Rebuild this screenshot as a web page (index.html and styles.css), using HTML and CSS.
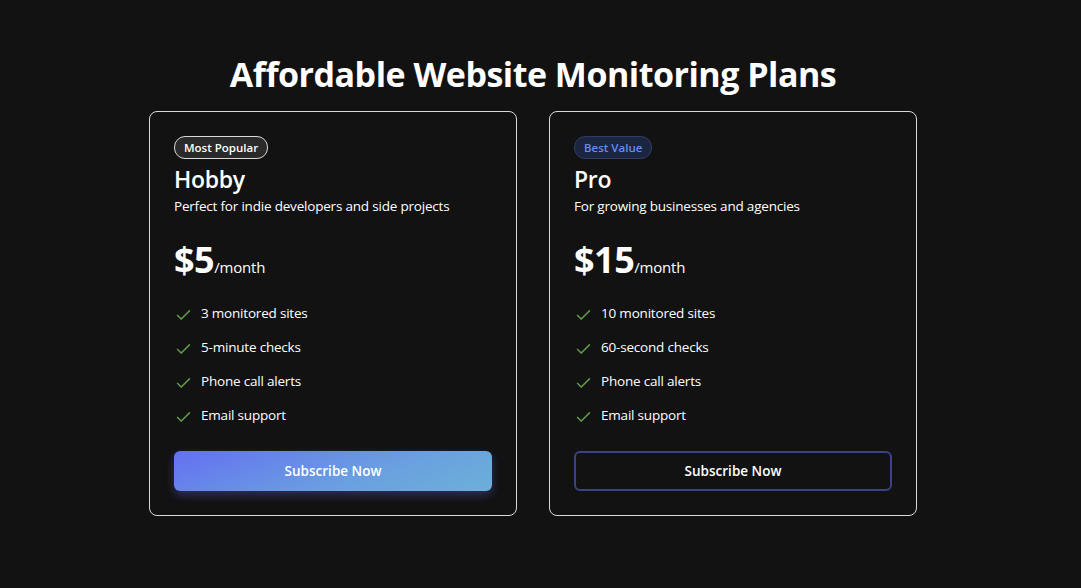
FILE: index.html
```html
<!DOCTYPE html>
<html lang="en">
<head>
<meta charset="utf-8">
<title>Pricing</title>
<link rel="stylesheet" href="styles.css">
</head>
<body>
<main class="page">
  <h1 class="title">Affordable Website Monitoring Plans</h1>
  <div class="plans">
    <section class="card">
      <span class="badge badge-popular">Most Popular</span>
      <h2 class="plan-name">Hobby</h2>
      <p class="plan-desc">Perfect for indie developers and side projects</p>
      <div class="price"><span class="amount">$5</span><span class="period">/month</span></div>
      <ul class="features">
        <li><svg class="check" viewBox="0 0 16 12"><path d="M1 6.5 L5.5 11 L15 1.5"/></svg>3 monitored sites</li>
        <li><svg class="check" viewBox="0 0 16 12"><path d="M1 6.5 L5.5 11 L15 1.5"/></svg>5-minute checks</li>
        <li><svg class="check" viewBox="0 0 16 12"><path d="M1 6.5 L5.5 11 L15 1.5"/></svg>Phone call alerts</li>
        <li><svg class="check" viewBox="0 0 16 12"><path d="M1 6.5 L5.5 11 L15 1.5"/></svg>Email support</li>
      </ul>
      <button class="btn btn-primary">Subscribe Now</button>
    </section>
    <section class="card">
      <span class="badge badge-value">Best Value</span>
      <h2 class="plan-name">Pro</h2>
      <p class="plan-desc">For growing businesses and agencies</p>
      <div class="price"><span class="amount">$15</span><span class="period">/month</span></div>
      <ul class="features">
        <li><svg class="check" viewBox="0 0 16 12"><path d="M1 6.5 L5.5 11 L15 1.5"/></svg>10 monitored sites</li>
        <li><svg class="check" viewBox="0 0 16 12"><path d="M1 6.5 L5.5 11 L15 1.5"/></svg>60-second checks</li>
        <li><svg class="check" viewBox="0 0 16 12"><path d="M1 6.5 L5.5 11 L15 1.5"/></svg>Phone call alerts</li>
        <li><svg class="check" viewBox="0 0 16 12"><path d="M1 6.5 L5.5 11 L15 1.5"/></svg>Email support</li>
      </ul>
      <button class="btn btn-outline">Subscribe Now</button>
    </section>
  </div>
</main>
</body>
</html>
```

FILE: styles.css
```css
html, body {
  margin: 0;
  padding: 0;
  background: #121212;
  color: #ffffff;
  font-family: "Open Sans", "Noto Sans", sans-serif;
}

.page {
  display: flex;
  flex-direction: column;
  align-items: center;
  padding-top: 52px;
  padding-right: 15px;
}

.title {
  margin: 0 0 15px;
  font-size: 34px;
  font-weight: 700;
  line-height: 44px;
  letter-spacing: -0.5px;
}

.plans {
  display: flex;
  gap: 32px;
}

.card {
  width: 318px;
  padding: 24px;
  border: 1px solid #d9d9d9;
  border-radius: 8px;
  display: flex;
  flex-direction: column;
  align-items: flex-start;
}

.badge {
  height: 21px;
  line-height: 21px;
  padding: 0 9px;
  border-radius: 11px;
  font-size: 11.5px;
  font-weight: 600;
}

.badge-popular {
  background: #2a2a2a;
  border: 1px solid #d9d9d9;
  color: #ffffff;
}

.badge-value {
  background: #1c2540;
  border: 1px solid #2f3d66;
  color: #5f90f2;
}

.plan-name {
  margin: 4px 0 0;
  font-size: 23px;
  font-weight: 600;
  line-height: 32px;
  letter-spacing: -0.3px;
}

.plan-desc {
  margin: 1px 0 0;
  font-size: 13.5px;
  line-height: 20px;
  letter-spacing: -0.2px;
}

.price {
  margin-top: 20px;
  display: flex;
  align-items: baseline;
}

.amount {
  font-size: 36px;
  font-weight: 700;
  line-height: 48px;
  letter-spacing: -0.5px;
}

.period {
  font-size: 15px;
  letter-spacing: -0.2px;
}

.features {
  list-style: none;
  margin: 19px 0 0;
  padding: 0;
  display: flex;
  flex-direction: column;
  gap: 14px;
}

.features li {
  display: flex;
  align-items: center;
  gap: 10px;
  font-size: 13.5px;
  line-height: 20px;
  letter-spacing: -0.2px;
}

.check {
  width: 15px;
  height: 11px;
  margin-left: 2px;
  margin-top: 2px;
  fill: none;
  stroke: #5f9a48;
  stroke-width: 1.6;
}

.btn {
  margin-top: 26px;
  width: 100%;
  height: 40px;
  border-radius: 6px;
  font-family: inherit;
  font-size: 13.5px;
  font-weight: 600;
  color: #ffffff;
  cursor: pointer;
}

.btn-primary {
  border: none;
  background: linear-gradient(160deg, #6470f2 0%, #6a9fe0 60%, #6cb0d8 100%);
  box-shadow: 0 4px 10px rgba(99, 102, 241, 0.35);
}

.btn-outline {
  background: transparent;
  border: 2px solid #3d4185;
}
```
